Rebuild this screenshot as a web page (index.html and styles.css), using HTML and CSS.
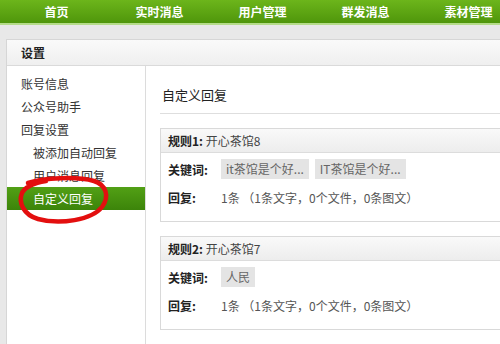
FILE: index.html
```html
<!DOCTYPE html>
<html lang="zh-CN">
<head>
  <meta charset="UTF-8">
  <title>设置 - 自定义回复</title>
  <link rel="stylesheet" href="styles.css">
</head>
<body>
  <div class="topnav">
    <a href="#">首页</a>
    <a href="#">实时消息</a>
    <a href="#">用户管理</a>
    <a href="#">群发消息</a>
    <a href="#">素材管理</a>
  </div>

  <div class="page">
    <div class="panel">
      <div class="panel-head">设置</div>
      <div class="panel-body">
        <ul class="sidebar">
          <li>账号信息</li>
          <li>公众号助手</li>
          <li>回复设置</li>
          <li class="sub">被添加自动回复</li>
          <li class="sub">用户消息回复</li>
          <li class="sub active">自定义回复</li>
        </ul>

        <div class="main">
          <h3 class="main-title">自定义回复</h3>

          <div class="rule">
            <div class="rule-head"><b>规则1:</b> 开心茶馆8</div>
            <div class="rule-body">
              <div class="row">
                <span class="label">关键词:</span>
                <span class="tag">it茶馆是个好...</span>
                <span class="tag">IT茶馆是个好...</span>
              </div>
              <div class="row">
                <span class="label">回复:</span>
                <span class="value">1条 （1条文字，0个文件，0条图文）</span>
              </div>
            </div>
          </div>

          <div class="rule">
            <div class="rule-head"><b>规则2:</b> 开心茶馆7</div>
            <div class="rule-body">
              <div class="row">
                <span class="label">关键词:</span>
                <span class="tag">人民</span>
              </div>
              <div class="row">
                <span class="label">回复:</span>
                <span class="value">1条 （1条文字，0个文件，0条图文）</span>
              </div>
            </div>
          </div>
        </div>
      </div>
    </div>
  </div>

  <!-- hand-drawn mark around the active menu item -->
  <svg class="scribble" width="120" height="60" viewBox="0 0 120 60">
    <path d="M 14 8 C 30 3, 62 1, 80 6 C 92 10, 96 21, 88 32 C 78 45, 46 50, 24 44 C 10 40, 4 28, 8 18 C 11 12, 20 8, 32 6"
          fill="none" stroke="#e30f0f" stroke-width="4.5" stroke-linecap="round" stroke-linejoin="round"/>
  </svg>
</body>
</html>
```

FILE: styles.css
```css
body {
  margin: 0;
  font-family: "Noto Sans CJK SC", "Liberation Sans", sans-serif;
  font-size: 12px;
  color: #333;
  background-color: #e8e8e8;
  overflow: hidden;
}
.topnav {
  display: flex;
  height: 23px;
  padding-left: 5px;
  background: linear-gradient(#6cb51b, #4f960b);
  border-bottom: 2px solid #b5dc8a;
}
.topnav a {
  flex-shrink: 0;
  width: 103px;
  line-height: 23px;
  text-align: center;
  color: #fff;
  font-weight: bold;
  text-decoration: none;
}
.page {
  padding: 14px 0 0 6px;
}
.panel {
  width: 720px;
  background: #fff;
  border: 1px solid #d6d6d6;
}
.panel-head {
  height: 25px;
  line-height: 25px;
  padding-left: 14px;
  font-weight: bold;
  color: #222;
  background: linear-gradient(#fafafa, #efefef);
  border-bottom: 1px solid #dadada;
}
.panel-body {
  display: flex;
  min-height: 290px;
}
.sidebar {
  list-style: none;
  margin: 0;
  padding: 6px 0 0;
  width: 138px;
  border-right: 1px solid #dcdcdc;
}
.sidebar li {
  height: 23px;
  line-height: 23px;
  padding-left: 14px;
  color: #333;
}
.sidebar li.sub {
  padding-left: 26px;
}
.sidebar li.active {
  color: #fff;
  background: linear-gradient(#52a015, #3c840a);
}
.main {
  flex: 1;
  padding: 19px 0 0 14px;
}
.main-title {
  margin: 0 0 14px;
  padding: 0 0 8px 2px;
  font-size: 13px;
  font-weight: normal;
  line-height: 20px;
  color: #222;
  border-bottom: 1px solid #dedede;
}
.rule {
  margin-bottom: 14px;
  border: 1px solid #d9d9d9;
}
.rule-head {
  height: 23px;
  line-height: 23px;
  padding-left: 7px;
  color: #444;
  background: linear-gradient(#f9f9f9, #ededed);
  border-bottom: 1px solid #dcdcdc;
}
.rule-head b {
  color: #222;
}
.rule-body {
  padding: 6px 0 14px 7px;
}
.row {
  display: flex;
  align-items: center;
  gap: 6px;
  height: 20px;
  margin-bottom: 8px;
}
.row:last-child {
  margin-bottom: 0;
}
.label {
  width: 47px;
  font-weight: bold;
  color: #222;
}
.tag {
  height: 20px;
  line-height: 20px;
  padding: 0 5px;
  background: #e4e4e4;
  color: #666;
  white-space: nowrap;
}
.value {
  color: #555;
}
.scribble {
  position: absolute;
  left: 14px;
  top: 175px;
}
```
